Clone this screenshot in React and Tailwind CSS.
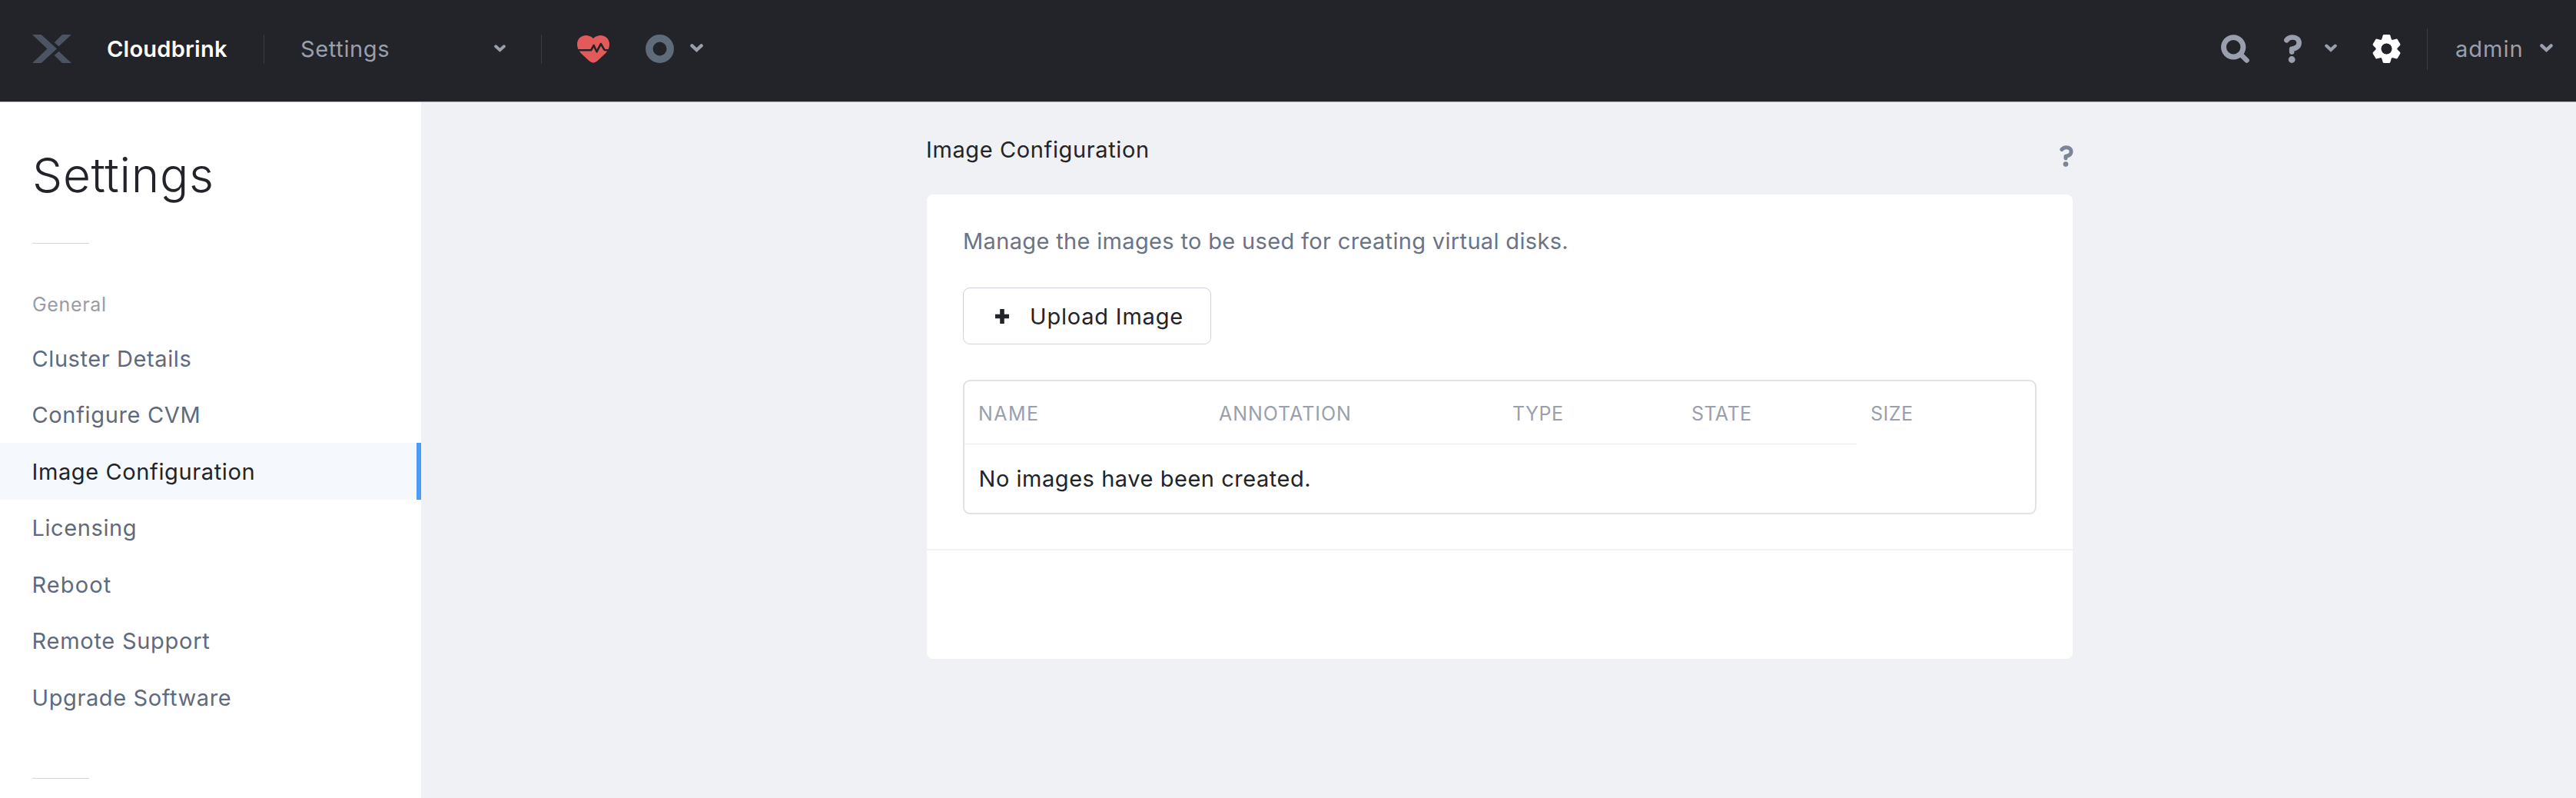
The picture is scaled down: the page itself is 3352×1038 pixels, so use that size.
import React from "react";

function Logo() {
  return (
    <svg className="h-[37px] w-[51px] shrink-0 fill-[#4c5362]" viewBox="0 0 51 37">
      <path d="M0 0H11.7L32 18.4L11.7 37H0L19.5 18.4Z" />
      <path d="M39 0H51L34.5 15.3L28.7 10.2Z" />
      <path d="M34.5 21.7L51 37H39L28.7 26.9Z" />
    </svg>
  );
}

function Chevron({ className }) {
  return (
    <svg className={className} viewBox="0 0 17 11" fill="none" stroke="#9a9fae" strokeWidth="4.4" strokeLinecap="round" strokeLinejoin="miter">
      <path d="M2.4 2.4L8.5 8L14.6 2.4" />
    </svg>
  );
}

function HeartPulse() {
  return (
    <svg className="h-9 w-[42px] shrink-0" viewBox="0 0 42 36">
      <path
        fill="#e25b5a"
        d="M21 4C24 1 27.500 0 30.500 0C37.200 0 42 5 42 11.500C42 16 40.300 19.500 37.300 23L26 33.600Q21 37.800 16 33.600L4.700 23C1.700 19.500 0 16 0 11.500C0 5 4.800 0 11.500 0C14.500 0 18 1 21 4Z"
      />
      <path fill="none" stroke="#222429" strokeWidth="2.6" strokeLinejoin="round" d="M0 19.200H18.300L21.600 13L25.500 21.300L30.800 11L35 18.200Q35.600 19.200 37 19.200H42" />
    </svg>
  );
}

function Ring() {
  return (
    <svg className="size-[37px] shrink-0" viewBox="0 0 37 37">
      <circle cx="18.500" cy="18.500" r="13.700" fill="none" stroke="#5f6a7b" strokeWidth="9.500" />
    </svg>
  );
}

function Search() {
  return (
    <svg className="size-[37px] shrink-0" viewBox="0 0 37 37" fill="none" stroke="#9a9fae">
      <circle cx="16.200" cy="16.300" r="12.700" strokeWidth="6.900" />
      <path d="M26 26L33.500 33.500" strokeWidth="6.600" strokeLinecap="round" />
    </svg>
  );
}

function Question({ className }) {
  return (
    <svg className={className} viewBox="0 0 23 37" fill="none" stroke="currentColor">
      <path d="M3.400 7.200C5.200 4.700 8 3.500 11.200 3.500C16 3.500 19.600 6.400 19.600 10.800C19.600 15.600 15.800 18 10.200 18.800V22.600" strokeWidth="6.600" strokeLinecap="round" strokeLinejoin="round" />
      <circle cx="10.200" cy="32.500" r="4.400" fill="currentColor" stroke="none" />
    </svg>
  );
}

function Gear() {
  return (
    <svg className="size-[37px] shrink-0" viewBox="-18.5 -18.5 37 37" fill="#fff">
      {[0, 60, 120, 180, 240, 300].map((a) => (
        <path key={a} transform={`rotate(${a})`} d="M-7 -10L-4.900 -17.200Q-4.600 -18.500 -3.300 -18.500H3.300Q4.600 -18.500 4.900 -17.200L7 -10Z" />
      ))}
      <circle r="10.300" fill="none" stroke="#fff" strokeWidth="7" />
      <circle r="6.900" fill="#222429" />
    </svg>
  );
}

const NAV = [
  { label: "Cluster Details", track: "tracking-[0.59px]" },
  { label: "Configure CVM", track: "tracking-[0.65px]" },
  { label: "Image Configuration", track: "tracking-[0.62px]", active: true },
  { label: "Licensing", track: "tracking-[0.6px]" },
  { label: "Reboot", track: "tracking-[1.1px]" },
  { label: "Remote Support", track: "tracking-[0.74px]" },
  { label: "Upgrade Software", track: "tracking-[0.6px]" },
];

function Header() {
  return (
    <header className="flex h-[133px] shrink-0 items-center border-b border-[#b2b2b8] bg-[#222429] pr-[30px] pb-[5px] pl-[42px]">
      <Logo />
      <span className="ml-[46px] w-[204px] shrink-0 font-semibold tracking-[0.25px] text-white">Cloudbrink</span>
      <i className="h-[38px] w-px bg-[#3a3c42]" />
      <span className="ml-[47px] w-[252px] shrink-0 tracking-[0.65px] text-[#9a9fae]">Settings</span>
      <Chevron className="-mt-0.5 h-[10px] w-[15px] shrink-0" />
      <i className="ml-[46px] h-[38px] w-px bg-[#3a3c42]" />
      <span className="ml-[46px]"><HeartPulse /></span>
      <span className="ml-[47px]"><Ring /></span>
      <Chevron className="-mt-0.5 ml-[21px] h-[11px] w-[17px] shrink-0" />
      <div className="ml-auto flex items-center">
        <Search />
        <Question className="ml-[45px] h-[37px] w-[23px] shrink-0 text-[#9a9fae]" />
        <Chevron className="-mt-0.5 ml-[30px] h-[11px] w-4 shrink-0" />
        <span className="ml-[46px]"><Gear /></span>
        <i className="ml-[34px] h-[54px] w-px bg-[#3a3c42]" />
        <span className="ml-[36px] w-[110px] tracking-[1px] text-[#9a9fae]">admin</span>
        <Chevron className="-mt-0.5 h-[11px] w-[17px] shrink-0" />
      </div>
    </header>
  );
}

function Sidebar() {
  return (
    <aside className="w-[548px] shrink-0 bg-white pt-14">
      <h1 className="ml-[42px] h-[77px] text-[62px] leading-[77px] font-light tracking-[0.71px] text-[#222429]">Settings</h1>
      <hr className="mt-[50px] ml-[42px] h-px w-[74px] border-0 bg-[#d3d3d9]" />
      <h2 className="mt-[63px] ml-[42px] h-8 text-[25px] leading-8 tracking-[0.65px] text-[#9a9da6]">General</h2>
      <nav className="mt-[17px]">
        {NAV.map((n) => (
          <a
            key={n.label}
            className={`flex h-[73.5px] items-center pt-0.5 pl-[41.5px] ${n.track} ${
              n.active ? "border-r-[6px] border-[#4b9cf5] bg-[#f5f9fe] text-[#222429]" : "text-[#5f6a7e]"
            }`}
          >
            {n.label}
          </a>
        ))}
      </nav>
      <hr className="mt-[68px] ml-[42px] h-px w-[74px] border-0 bg-[#d3d3d9]" />
    </aside>
  );
}

function ImageTable() {
  const th = "flex h-[82px] items-center border-b border-[#ebecef] pt-0.5 pl-[18px]";
  return (
    <div className="mt-[46px] h-[175px] rounded-[9px] border-2 border-[#e1e2e4]">
      <div className="grid grid-cols-[313px_382px_233px_233px_1fr] text-[25px] leading-8 text-[#9a9fae]">
        <div className={th}><span className="tracking-[1.43px]">NAME</span></div>
        <div className={th}><span className="tracking-[0.95px]">ANNOTATION</span></div>
        <div className={th}><span className="tracking-[0.47px]">TYPE</span></div>
        <div className={th}><span className="tracking-[0.41px]">STATE</span></div>
        <div className="flex h-[82px] items-center pt-px pl-[18px] tracking-[0.5px]">SIZE</div>
      </div>
      <p className="mt-[27px] pl-[18.500px] tracking-[0.54px] text-[#222429]">No images have been created.</p>
    </div>
  );
}

export default function App() {
  return (
    <div className="flex h-[1038px] w-[3352px] flex-col overflow-hidden bg-[#f0f1f5] font-['Inter',sans-serif] text-[29px] leading-9">
      <Header />
      <div className="flex min-h-0 flex-1">
        <Sidebar />
        <main className="ml-[658px] w-[1491px] pt-11">
          <div className="flex h-[76px] justify-between">
            <h2 className="-ml-px tracking-[0.62px] text-[#222429]">Image Configuration</h2>
            <Question className="mt-3 -mr-px h-7 w-[18px] text-[#7a8698]" />
          </div>
          <section className="h-[604px] rounded-[8px] bg-white">
            <div className="h-[461px] px-[47px] pt-[43px]">
              <p className="tracking-[0.34px] text-[#6b7386]">Manage the images to be used for creating virtual disks.</p>
              <button className="mt-[42px] flex h-[74px] w-[323px] items-center rounded-[9px] border border-[#cfd2da] pl-[41px] text-[#222429]">
                <svg className="h-[19px] w-[18px]" viewBox="0 0 18 19" fill="none" stroke="#222429" strokeWidth="5.600">
                  <path d="M0 9.500H18M9 0V19" />
                </svg>
                <span className="ml-[27px] pt-px tracking-[0.8px]">Upload Image</span>
              </button>
              <ImageTable />
            </div>
            <hr className="h-0.5 border-0 bg-[#f1f2f4]" />
          </section>
        </main>
      </div>
    </div>
  );
}
